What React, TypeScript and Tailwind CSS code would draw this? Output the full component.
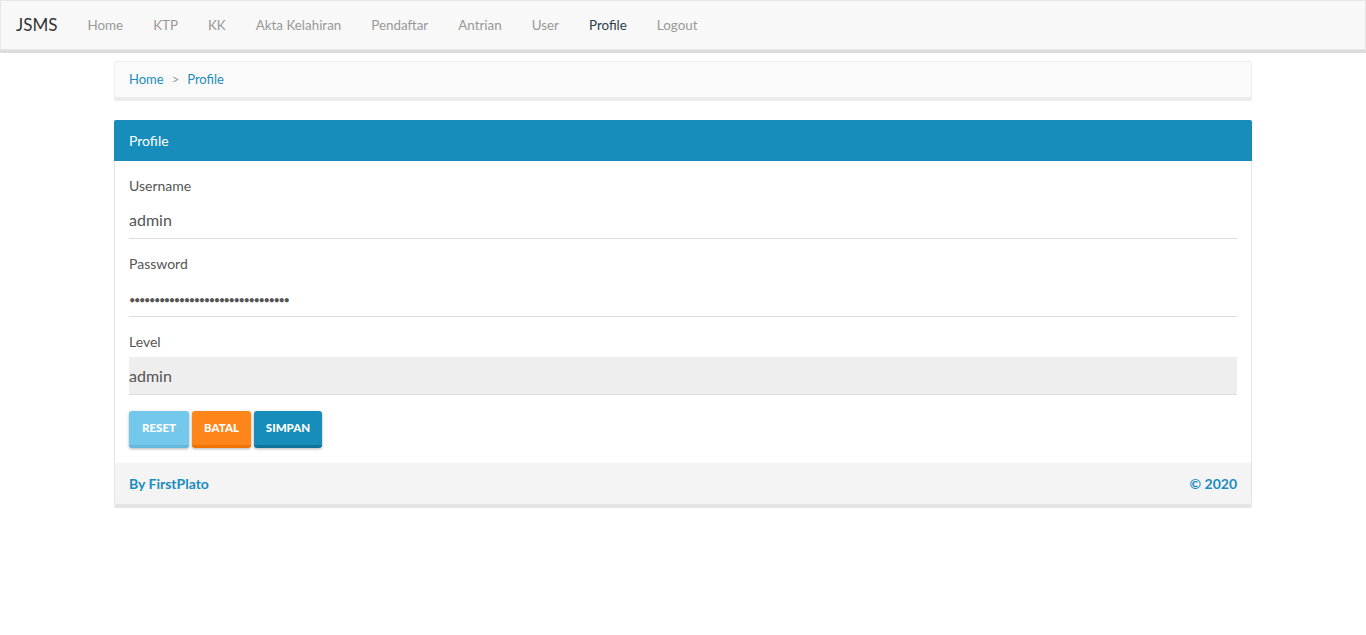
import { memo } from 'react'

const navItems = ['Home', 'KTP', 'KK', 'Akta Kelahiran', 'Pendaftar', 'Antrian', 'User', 'Profile', 'Logout']

function Navbar() {
  return (
    <nav className="h-[50px] bg-[#f8f8f8] border border-[#e7e7e7] shadow-[0_3px_0_#dcdcdc] flex items-center">
      <span className="pl-[15px] pr-[15px] text-[17px] text-[#333]">JSMS</span>
      <ul className="flex">
        {navItems.map((item) => (
          <li
            key={item}
            className={`px-[15px] text-[13.4px] ${item === 'Profile' ? 'text-[#2c3e50]' : 'text-[#999]'}`}
          >
            {item}
          </li>
        ))}
      </ul>
    </nav>
  )
}

function Field({ label, value, disabled, password }: { label: string; value: string; disabled?: boolean; password?: boolean }) {
  return (
    <div className="mb-[16px]">
      <label className="block text-[14px] text-[#555] leading-[18px] mb-[6px]">{label}</label>
      <div
        className={`h-[38px] flex items-center border-b border-[#ddd] text-[#555] ${disabled ? 'bg-[#eee]' : ''} ${password ? 'text-[11px] tracking-[-1.4px] pt-[6px]' : 'text-[16px]'}`}
      >
        {value}
      </div>
    </div>
  )
}

function App() {
  return (
    <div className="min-h-screen bg-white font-['Lato','Open_Sans',sans-serif]">
      <Navbar />
      <div className="w-[1138px] mx-auto pt-[11px]">
        <div className="h-[37px] bg-[#fafafa] border border-[#eee] rounded-[2px] shadow-[0_3px_0_#ececec] flex items-center px-[14px] text-[13px]">
          <span className="text-[#1a8cbf]">Home</span>
          <span className="text-[#999] px-[8px]">&gt;</span>
          <span className="text-[#1a8cbf]">Profile</span>
        </div>

        <div className="mt-[22px] border border-[#e5e5e5] rounded-[2px] shadow-[0_3px_0_#e5e5e5]">
          <div className="h-[41px] bg-[#178dbb] flex items-center px-[15px] text-[14px] text-white -m-px rounded-t-[2px]">
            Profile
          </div>
          <div className="px-[14px] pt-[17px]">
            <Field label="Username" value="admin" />
            <Field label="Password" value={'•'.repeat(32)} password />
            <Field label="Level" value="admin" disabled />
            <div className="flex gap-[3px] pb-[15px]">
              <button className="h-[37px] w-[60px] rounded-[3px] bg-[#74c8ec] border-b-[3px] border-[#62b8dd] text-white text-[11.5px] font-black shadow-[0_1px_3px_rgba(0,0,0,0.3)]">
                RESET
              </button>
              <button className="h-[37px] w-[59px] rounded-[3px] bg-[#fd8519] border-b-[3px] border-[#ef7405] text-white text-[11.5px] font-black shadow-[0_1px_3px_rgba(0,0,0,0.3)]">
                BATAL
              </button>
              <button className="h-[37px] w-[68px] rounded-[3px] bg-[#178dbb] border-b-[3px] border-[#10739b] text-white text-[11.5px] font-black shadow-[0_1px_3px_rgba(0,0,0,0.3)]">
                SIMPAN
              </button>
            </div>
          </div>
          <div className="h-[41px] bg-[#f4f4f4] flex items-center justify-between px-[14px] text-[14px] font-bold text-[#1a8cbf]">
            <span>By FirstPlato</span>
            <span>© 2020</span>
          </div>
        </div>
      </div>
    </div>
  )
}

export default memo(App)
